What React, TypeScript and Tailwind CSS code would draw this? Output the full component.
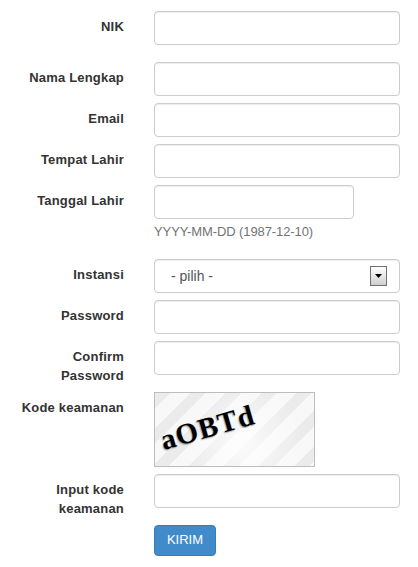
import type { ReactNode } from 'react';

const inputClass =
  'h-[34px] w-full rounded-[4px] border border-[#ccc] bg-white px-3 text-sm text-[#555] shadow-[inset_0_1px_1px_rgba(0,0,0,0.075)] outline-none';

const Field = ({ label, children, className = 'mb-[7px]' }: { label?: ReactNode; children: ReactNode; className?: string }) => {
  return (
    <div className={`flex items-start ${className}`}>
      <label className="w-[124px] shrink-0 pt-[6px] pl-[15px] text-right text-[13px] leading-[19px] font-bold tracking-[0.2px] text-[#333]">{label}</label>
      <div className="ml-[30px] w-[246px]">{children}</div>
    </div>
  );
};

export default function App() {
  return (
    <form className="min-h-[567px] bg-white pt-[11px] font-['Liberation_Sans',Arial,sans-serif] text-sm text-[#333]">
      <Field label="NIK" className="mb-[17px]">
        <input className={inputClass} />
      </Field>
      <Field label="Nama Lengkap">
        <input className={inputClass} />
      </Field>
      <Field label="Email">
        <input className={inputClass} />
      </Field>
      <Field label="Tempat Lahir">
        <input className={inputClass} />
      </Field>
      <Field label="Tanggal Lahir" className="mb-[15px]">
        <input className={`${inputClass} !w-[200px]`} />
        <p className="mt-[3px] h-[22px] text-[13px] leading-5 tracking-[-0.1px] text-[#737373]">YYYY-MM-DD (1987-12-10)</p>
      </Field>
      <Field label="Instansi">
        <div className="flex h-[34px] items-center justify-between rounded-[4px] border border-[#ccc] bg-white pr-3 pl-4 shadow-[inset_0_1px_1px_rgba(0,0,0,0.075)]">
          <span className="text-sm text-[#555]">- pilih -</span>
          <span className="flex h-5 w-[17px] items-center justify-center border border-[#707070] bg-gradient-to-b from-white to-[#cfcfcf]">
            <svg width="7" height="4" viewBox="0 0 7 4">
              <path d="M0 0h7L3.5 4z" fill="#000" />
            </svg>
          </span>
        </div>
      </Field>
      <Field label="Password">
        <input type="password" className={inputClass} />
      </Field>
      <Field label="Confirm Password">
        <input type="password" className={inputClass} />
      </Field>
      <Field label="Kode keamanan">
        <div className="relative h-[75px] w-[161px] overflow-hidden border border-[#bdbdbd] bg-[radial-gradient(circle_at_55%_70%,rgba(255,255,255,0.8),rgba(255,255,255,0)_60%),repeating-linear-gradient(135deg,#ebebeb_0,#ebebeb_11px,#f8f8f8_11px,#f8f8f8_25px)]">
          <span className="absolute top-[14px] left-[4px] origin-center -rotate-[16deg] font-['Liberation_Serif',serif] text-[29px] leading-10 font-bold tracking-[1px] text-black [text-shadow:-1px_1px_1px_#aaa]">
            aOBTd
          </span>
        </div>
      </Field>
      <Field label="Input kode keamanan">
        <input className={inputClass} />
      </Field>
      <Field>
        <button type="button" className="h-[31px] w-[62px] rounded-[4px] border border-[#357ebd] bg-[#428bca] text-[13px] text-white">
          KIRIM
        </button>
      </Field>
    </form>
  );
}
